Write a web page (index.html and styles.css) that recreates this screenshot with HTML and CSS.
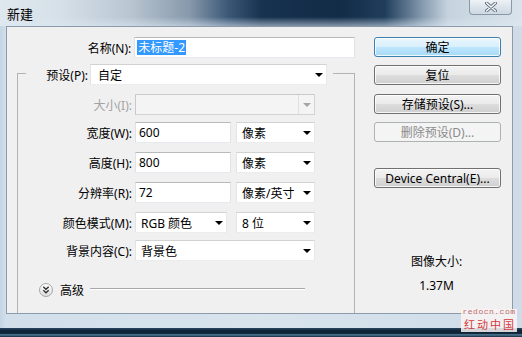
FILE: index.html
```html
<!DOCTYPE html>
<html>
<head>
<meta charset="utf-8">
<link rel="stylesheet" href="styles.css">
</head>
<body>
<div class="window">
  <div class="titlebar">
    <span class="title">新建</span>
    <div class="close">
      <svg width="12" height="10" viewBox="0 0 12 10"><path d="M1.5 1 L10.5 9 M10.5 1 L1.5 9" stroke="#5d6b78" stroke-width="3.2" stroke-linecap="round"/><path d="M1.5 1 L10.5 9 M10.5 1 L1.5 9" stroke="#f4f7fa" stroke-width="1.6" stroke-linecap="round"/></svg>
    </div>
  </div>
  <div class="client">
    <div class="left">
      <div class="row name-row">
        <span class="lbl lbl-name">名称(N):</span>
        <div class="field text name-field"><span class="sel">未标题-2</span></div>
      </div>
      <div class="group">
        <div class="preset">
          <span class="preset-lbl">预设(P):</span>
          <div class="field select preset-sel"><span class="val">自定</span><i class="arrow"></i></div>
        </div>
        <div class="row r-size">
          <span class="lbl dis">大小(I):</span>
          <div class="field select disabled wide"><span class="val"></span><span class="dbtn"><i class="arrow grey"></i></span></div>
        </div>
        <div class="row r-w">
          <span class="lbl">宽度(W):</span>
          <div class="field text num">600</div>
          <div class="field select unit"><span class="val">像素</span><i class="arrow"></i></div>
        </div>
        <div class="row r-h">
          <span class="lbl">高度(H):</span>
          <div class="field text num">800</div>
          <div class="field select unit"><span class="val">像素</span><i class="arrow"></i></div>
        </div>
        <div class="row r-r">
          <span class="lbl">分辨率(R):</span>
          <div class="field text num">72</div>
          <div class="field select unit"><span class="val">像素/英寸</span><i class="arrow"></i></div>
        </div>
        <div class="row r-m">
          <span class="lbl">颜色模式(M):</span>
          <div class="field select mode"><span class="val">RGB 颜色</span><i class="arrow"></i></div>
          <div class="field select unit"><span class="val">8 位</span><i class="arrow"></i></div>
        </div>
        <div class="row r-c">
          <span class="lbl">背景内容(C):</span>
          <div class="field select wide"><span class="val">背景色</span><i class="arrow"></i></div>
        </div>
        <div class="adv">
          <span class="chev"><svg width="14" height="14" viewBox="0 0 14 14"><defs><linearGradient id="g" x1="0" y1="0" x2="0" y2="1"><stop offset="0" stop-color="#ffffff"/><stop offset="1" stop-color="#dcdcdc"/></linearGradient></defs><circle cx="7" cy="7" r="6.5" fill="url(#g)" stroke="#a7a7a7"/><path d="M4.3 3.8 L7 6.2 L9.7 3.8 M4.3 7.3 L7 9.7 L9.7 7.3" fill="none" stroke="#333" stroke-width="1.4"/></svg></span>
          <span class="adv-lbl">高级</span>
          <span class="adv-line"></span>
        </div>
      </div>
    </div>
    <div class="right">
      <div class="btn default">确定</div>
      <div class="btn b2">复位</div>
      <div class="btn b3">存储预设(S)...</div>
      <div class="btn b4 disabled">删除预设(D)...</div>
      <div class="btn b5">Device Central(E)...</div>
      <div class="info">图像大小:</div>
      <div class="info-val">1.37M</div>
    </div>
  </div>
  <div class="taskbar"></div>
  <div class="watermark">
    <span class="wm1">redocn.com</span>
    <span class="wm2">红动中国</span>
  </div>
</div>
</body>
</html>
```
FILE: styles.css
```css
* { box-sizing: border-box; }
html, body { margin: 0; padding: 0; }
body {
  width: 522px;
  height: 337px;
  overflow: hidden;
  font-family: "Noto Sans", "Noto Sans CJK SC", sans-serif;
  font-size: 12px;
  color: #000;
}
.window {
  position: relative;
  width: 522px;
  height: 337px;
  display: flex;
  flex-direction: column;
  background: linear-gradient(90deg, #c4d5e4 0, #d2dfea 6px, #d8e3ec 50%, #cfdce8 100%);
}
.titlebar {
  position: relative;
  height: 26px;
  flex: none;
  background:
    linear-gradient(180deg, rgba(255,255,255,0) 0, rgba(255,255,255,0) 65%, rgba(220,232,242,0.55) 100%),
    linear-gradient(90deg, #dfe8ef 0px, #d6e0e8 60px, #b9c6d2 130px, #8698ab 190px, #3b5877 228px, #17324f 262px, #122b47 340px, #203e5c 385px, #7f95aa 420px, #c6d3de 448px, #d9e3eb 522px);
}
.title {
  position: absolute;
  left: 7px;
  top: 5px;
  font-family: "Noto Sans CJK SC", sans-serif;
  font-size: 13px;
  line-height: 18px;
}
.close {
  position: absolute;
  top: 0;
  left: 469px;
  width: 43px;
  height: 15px;
  border: 1px solid #8a99a8;
  border-top: none;
  border-radius: 0 0 4px 4px;
  background: linear-gradient(180deg, #eef2f6 0, #dce4eb 50%, #cdd8e2 100%);
  display: flex;
  align-items: center;
  justify-content: center;
  padding-bottom: 1px;
}
.client {
  flex: none;
  height: 288px;
  margin: 0 9px 14px 6px;
  border: 1px solid #8c9bab;
  background: #f0f0f0;
  display: flex;
}
.taskbar {
  flex: none;
  height: 9px;
  background: linear-gradient(180deg, #2a4660 0, #0f2538 30%, #0e2436 60%, #4f7d98 75%, #12293c 100%);
}
.left {
  margin-left: 10px;
  width: 338px;
  padding-top: 10px;
  display: flex;
  flex-direction: column;
}
.row {
  display: flex;
  align-items: center;
  height: 21px;
}
.lbl {
  width: 114px;
  margin-right: 3px;
  text-align: right;
  white-space: nowrap;
}
.lbl-name { width: 115px; }
.lbl.dis { color: #a3a3a3; }
.field {
  height: 21px;
  background: #fff;
  display: flex;
  align-items: center;
  white-space: nowrap;
  position: relative;
}
.text {
  border: 1px solid;
  border-color: #b7b9bd #e0e3e8 #e6e9ee #dfe2e7;
  padding-left: 3px;
}
.name-field { width: 222px; padding-left: 2px; }
.sel {
  background: #3399ff;
  color: #fff;
  line-height: 15px;
  padding: 0 1px;
}
.num { width: 96px; margin-right: 5px; }
.select {
  border: 1px solid;
  border-color: #d2d2d2 #e8e8e8 #ececec #e4e4e4;
  padding-left: 5px;
}
.select .val { flex: 1; }
.arrow {
  width: 0;
  height: 0;
  border-left: 4px solid transparent;
  border-right: 4px solid transparent;
  border-top: 4px solid #000;
  margin-right: 3px;
  margin-top: 1px;
}
.arrow.grey { border-top-color: #a5a5a5; margin: 0; }
.unit { width: 79px; }
.wide { width: 180px; }
.mode { width: 92px; margin-right: 9px; }
.disabled.select {
  background: #f4f4f4;
  border-color: #c9c9c9 #d3d3d3 #d3d3d3 #c9c9c9;
  padding-left: 0;
}
.dbtn {
  width: 16px;
  height: 19px;
  border-left: 1px solid #e0e0e0;
  display: flex;
  align-items: center;
  justify-content: center;
}
.group {
  margin-top: 15px;
  flex: 1;
  border: 1px solid #b4b4b4;
  border-bottom: none;
  display: flex;
  flex-direction: column;
}
.preset {
  margin-top: -10px;
  margin-left: 8px;
  align-self: flex-start;
  background: #f0f0f0;
  padding: 0 6px 0 14px;
  display: flex;
  align-items: center;
  height: 21px;
}
.preset-lbl {
  width: 48px;
  margin-right: 2px;
  text-align: right;
  white-space: nowrap;
}
.preset-sel { width: 237px; padding-left: 7px; }
.r-size { margin-top: 9px; }
.r-w { margin-top: 7px; }
.r-h, .r-r, .r-m { margin-top: 9px; }
.r-c { margin-top: 7px; }
.adv {
  margin-top: 22px;
  padding-left: 21px;
  display: flex;
  align-items: center;
  height: 14px;
}
.chev { width: 14px; height: 14px; display: block; }
.chev svg { display: block; }
.adv-lbl { margin-left: 7px; }
.adv-line {
  margin-left: 6px;
  width: 215px;
  height: 2px;
  border-top: 1px solid #a8a8a8;
  border-bottom: 1px solid #ffffff;
  margin-top: -2px;
}
.right {
  margin-left: 19px;
  width: 127px;
  padding-top: 10px;
  display: flex;
  flex-direction: column;
}
.btn {
  height: 20px;
  border: 1px solid #707070;
  border-radius: 3px;
  background: linear-gradient(180deg, #f3f3f3 0, #ebebeb 48%, #dddddd 52%, #cfcfcf 100%);
  box-shadow: inset 0 0 0 1px rgba(255,255,255,0.8);
  display: flex;
  align-items: center;
  justify-content: center;
  white-space: nowrap;
}
.btn.default {
  border-color: #3c7fb1;
  background: linear-gradient(180deg, #eaf6fd 0, #d9f0fc 48%, #bee6fd 52%, #a7d9f5 100%);
}
.b2 { margin-top: 8px; }
.b3 { margin-top: 9px; }
.b4 { margin-top: 8px; }
.b5 { margin-top: 26px; }
.btn.disabled {
  border-color: #adb2b5;
  background: #f4f4f4;
  box-shadow: none;
  color: #8b8b8b;
}
.info {
  margin-top: 67px;
  text-align: center;
  line-height: 14px;
  padding-right: 2px;
}
.info-val {
  margin-top: 10px;
  text-align: center;
  line-height: 14px;
  padding-right: 2px;
}
.watermark {
  position: absolute;
  left: 461px;
  top: 309px;
  width: 56px;
  height: 23px;
  background: rgba(250, 245, 245, 0.85);
  display: flex;
  flex-direction: column;
  align-items: center;
}
.wm1 {
  font-family: "Liberation Mono", monospace;
  font-size: 8px;
  line-height: normal;
  margin-top: -2px;
  letter-spacing: 0.5px;
  color: #b96a6a;
}
.wm2 {
  font-family: "Noto Sans CJK SC", sans-serif;
  font-size: 11px;
  line-height: normal;
  letter-spacing: 2px;
  margin-left: 2px;
  color: #d2393c;
}
```
